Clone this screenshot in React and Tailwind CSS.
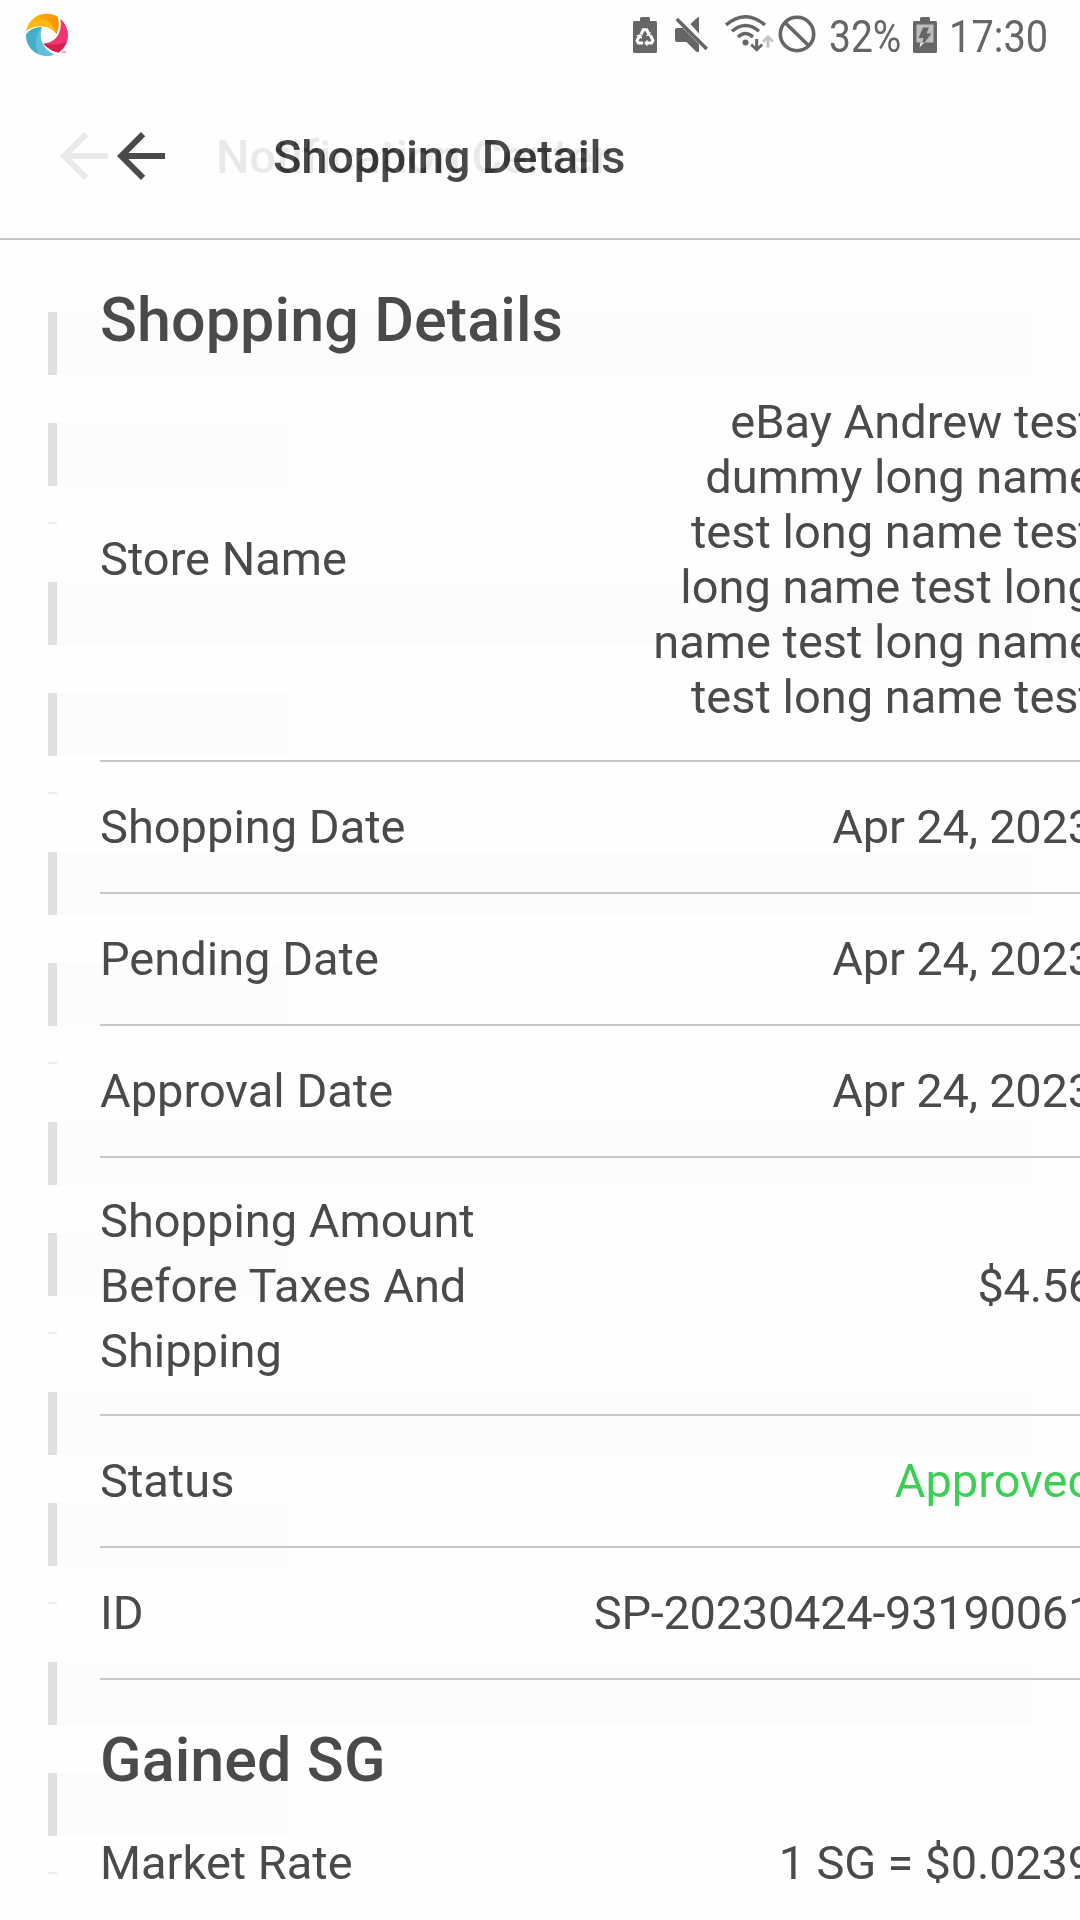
import React from "react";

function ArrowBack({ className }) {
  return (
    <svg viewBox="0 0 24 24" className={className} fill="currentColor">
      <path d="M20 11H7.83l5.59-5.59L12 4l-8 8 8 8 1.41-1.41L7.83 13H20v-2z" />
    </svg>
  );
}

function AppLogo() {
  return (
    <svg viewBox="0 0 44 44" className="h-[44px] w-[44px]">
      <defs>
        <linearGradient id="orange" x1="0" y1="0" x2="1" y2="0">
          <stop offset="0" stopColor="#fdbd12" />
          <stop offset="0.5" stopColor="#ffa608" />
          <stop offset="1" stopColor="#fb9200" />
        </linearGradient>
      </defs>
      <path d="M1.3 18C3 8 11 .7 22 .8C26.600 .9 30 2 32.500 3.500C34.500 9 34.200 15 31.500 21C29 17 24 13.500 17 13.200C10.500 12.800 5 14.200 1.300 18Z" fill="url(#orange)" />
      <path d="M1.300 18C4 11 9 6.500 16 6.500C23 6.700 29 12 31.500 21C29 17 24 13.500 17 13.200C10.500 12.800 5 14.200 1.300 18Z" fill="#fdb913" />
      <path d="M35.500 6C40 10 43 16 43 22.500C43 30 39 36 33.500 39.500C28 38.500 22 35 18.500 30.500C26 30 32 26 34.500 19C36 14.500 36.200 10 35.500 6Z" fill="#f0366f" />
      <path d="M18.500 30.500C25 32.500 34 32 41.500 29C39.500 33.500 37 37 33.500 39.500C28 38.500 22 35 18.500 30.500Z" fill="#d81e51" />
      <path d="M17 14.200C9 14.200 3.500 17 1 22C1 33 9.500 43 22 43C25 43 27 42.600 29 41.500C21 37.500 15.500 30 15.800 21C15.900 18 16.500 16 17 14.200Z" fill="#61c1da" />
      <path d="M17 14.200C9 14.200 3.500 17 1 22C1 30.500 6 37.500 13 41C10 33 9.500 21 17 14.200Z" fill="#45afc8" />
      <path d="M37 38h1.500v2H37zM39.200 38h1.700v2h-1.700z" fill="#f58cad" />
    </svg>
  );
}

function BatteryRecycle() {
  return (
    <svg viewBox="0 0 24 36" className="h-[36px] w-[24px]">
      <path d="M7 4V1.500Q7 0 8.500 0H15.500Q17 0 17 1.500V4H22.500Q24 4 24 5.500V34.500Q24 36 22.500 36H1.500Q0 36 0 34.500V5.500Q0 4 1.500 4Z" fill="#666" />
      <g fill="none" stroke="#fff" strokeWidth="3">
        <path d="M8 17.500L10.300 12.800H13.700L15.500 16.500" />
        <path d="M17.500 18.500L20 23.500L18.600 26H13.500" />
        <path d="M10 26H5.400L4 23.500L6.300 19.500" />
      </g>
      <path d="M17.500 14.500V19H12.800zM14.500 22.500V29.500L11 26zM3 18.500L8.500 17L9 22z" fill="#fff" />
    </svg>
  );
}

function MutedSpeaker() {
  return (
    <svg viewBox="0 0 34 36" className="h-[36px] w-[34px]" fill="#666">
      <path d="M0 13Q0 11 2 11H8L24 27V35Q22 35.500 20 33.500L11.500 25H2Q0 25 0 23Z" />
      <path d="M15.500 7L22 1Q23 0 24 0V16.500Z" />
      <path d="M3 .8L33 30.800L30.500 33.300L.5 3.300Z" />
    </svg>
  );
}

function WifiTransfer() {
  return (
    <svg viewBox="0 0 50 38" className="h-[38px] w-[50px]">
      <g fill="none" stroke="#666" strokeWidth="3.400">
        <path d="M1 10Q20.500 -6.500 40 10" />
        <path d="M7 16.200Q20.500 4.600 34 16.200" />
        <path d="M13 22Q20.500 15 28 22" />
      </g>
      <circle cx="20.500" cy="27.500" r="3" fill="#666" />
      <path d="M30.200 24h3v7.500l3-3 1.900 1.900-6.400 6.400-6.400-6.400 1.900-1.900 3 3z" fill="#666" />
      <path d="M41.500 32.500h3v-7.500l2.500 2.500 1.800-1.800-5.800-6-5.800 6 1.800 1.800 2.500-2.500z" fill="#c2c2c2" />
    </svg>
  );
}

function Prohibited() {
  return (
    <svg viewBox="0 0 38 38" className="h-[38px] w-[38px]" fill="none" stroke="#666" strokeWidth="3.600">
      <circle cx="19" cy="19" r="16.700" />
      <path d="M7 7.500L31 31" />
    </svg>
  );
}

function BatteryCharging() {
  return (
    <svg viewBox="0 0 24 36" className="h-[36px] w-[24px]">
      <path d="M7 4V1.500Q7 0 8.500 0H15.500Q17 0 17 1.500V4H22.500Q24 4 24 5.500V34.500Q24 36 22.500 36H1.500Q0 36 0 34.500V5.500Q0 4 1.500 4Z" fill="#666" />
      <path d="M3.500 7.500h17V25.500h-17z" fill="#bdbdbd" />
      <path d="M10 10.500H16L13.500 16.500H18.500L8 30L10.500 21H5.500Z" fill="#666" />
      <path d="M10.500 25.500H11.500L6.500 30.500L7.500 25.500Z" fill="#e8e8e8" />
    </svg>
  );
}

function StatusBar() {
  return (
    <div className="flex h-[72px] items-start text-[45px] leading-[52px] text-[#666]">
      <div className="ml-[25px] mt-[13px]"><AppLogo /></div>
      <div className="ml-[564px] mt-[17px]"><BatteryRecycle /></div>
      <div className="ml-[18px] mt-[17px]"><MutedSpeaker /></div>
      <div className="ml-[16px] mt-[15px]"><WifiTransfer /></div>
      <div className="ml-[3px] mt-[15px]"><Prohibited /></div>
      <div className="ml-[13px] mt-[11px] w-[72px]">
        <div className="w-max origin-left scale-x-[0.865]">32%</div>
      </div>
      <div className="ml-[12px] mt-[17px]"><BatteryCharging /></div>
      <div className="ml-[12px] mt-[11px] w-[100px]">
        <div className="w-max origin-left scale-x-[0.885]">17:30</div>
      </div>
    </div>
  );
}

/* The outgoing screen's toolbar darkens whatever it passes over. */
function OutgoingToolbar() {
  return (
    <div className="pointer-events-none absolute left-0 top-[72px] flex h-[168px] w-full items-center pl-[48px] text-[#151515] mix-blend-difference">
      <ArrowBack className="h-[72px] w-[72px]" />
      <div className="ml-[96px] pt-[2px] text-[47px] font-medium leading-[56px] tracking-[-0.2px]">Notification Center</div>
    </div>
  );
}

function SkeletonGroup() {
  return (
    <div className="h-[270px]">
      <div className="flex h-[63px]">
        <div className="w-[9px] bg-[#e0e0e0]" />
        <div className="w-[975px] bg-[#fcfcfc]" />
      </div>
      <div className="mt-[48px] flex h-[63px]">
        <div className="w-[9px] bg-[#e0e0e0]" />
        <div className="w-[232px] bg-[#fcfcfc]" />
      </div>
      <div className="mt-[36px] flex h-[2px]">
        <div className="w-[9px] bg-[#ededed]" />
        <div className="w-[975px] bg-[#fdfdfd]" />
      </div>
    </div>
  );
}

function Row({ label, value, height, valueClass = "pb-[2px]", last }) {
  return (
    <div className={`flex items-center justify-between text-[47px] ${height} ${last ? "" : "border-b-2 border-[#c7c7c7]"}`}>
      <div className="w-[420px] pb-[2px] leading-[65px]">{label}</div>
      <div className={`whitespace-pre text-right leading-[55px] ${valueClass}`}>{value}</div>
    </div>
  );
}

const storeName = [
  "eBay Andrew test",
  "dummy long name",
  "test long name test",
  "long name test long",
  "name test long name",
  "test long name test",
].join("\n");

export default function App() {
  return (
    <div className="relative isolate h-[1920px] w-[1080px] overflow-hidden bg-[#fefefe] font-['Roboto',sans-serif] text-[#4a4a4a]">
      <div className="absolute left-[48px] top-[312px] -z-10">
        {[0, 1, 2, 3, 4, 5].map((n) => <SkeletonGroup key={n} />)}
      </div>

      <StatusBar />
      <header className="flex h-[168px] items-center border-b-2 border-[#c5c5c5] pl-[105px] pt-[2px]">
        <ArrowBack className="h-[72px] w-[72px]" />
        <h1 className="ml-[96px] whitespace-nowrap pt-[2px] text-[47px] font-medium leading-[56px] tracking-[-0.2px]">Shopping Details</h1>
      </header>
      <OutgoingToolbar />

      <main className="ml-[100px] w-[994px]">
        <h2 className="flex h-[118px] items-end pb-[3px] text-[61px] font-medium leading-[70px] tracking-[0.1px]">Shopping Details</h2>
        <Row label="Store Name" value={storeName} height="h-[404px]" valueClass="" />
        <Row label="Shopping Date" value="Apr 24, 2023" height="h-[132px]" valueClass="pb-[2px] tracking-[-0.2px]" />
        <Row label="Pending Date" value="Apr 24, 2023" height="h-[132px]" valueClass="pb-[2px] tracking-[-0.2px]" />
        <Row label="Approval Date" value="Apr 24, 2023" height="h-[132px]" valueClass="pb-[2px] tracking-[-0.2px]" />
        <Row label="Shopping Amount Before Taxes And Shipping" value="$4.56" height="h-[258px]" valueClass="pb-[2px] tracking-[-0.3px]" />
        <Row label="Status" value="Approved" height="h-[132px]" valueClass="pb-[2px] text-[#3dcf55]" />
        <Row label="ID" value="SP-20230424-93190061" height="h-[132px]" valueClass="pb-[2px] tracking-[-0.3px]" />
        <h2 className="flex h-[118px] items-end pb-[3px] text-[61px] font-medium leading-[70px] tracking-[0.1px]">Gained SG</h2>
        <Row label="Market Rate" value="1 SG = $0.0239" height="h-[130px]" valueClass="pb-[2px] tracking-[-0.2px]" last />
      </main>
    </div>
  );
}
